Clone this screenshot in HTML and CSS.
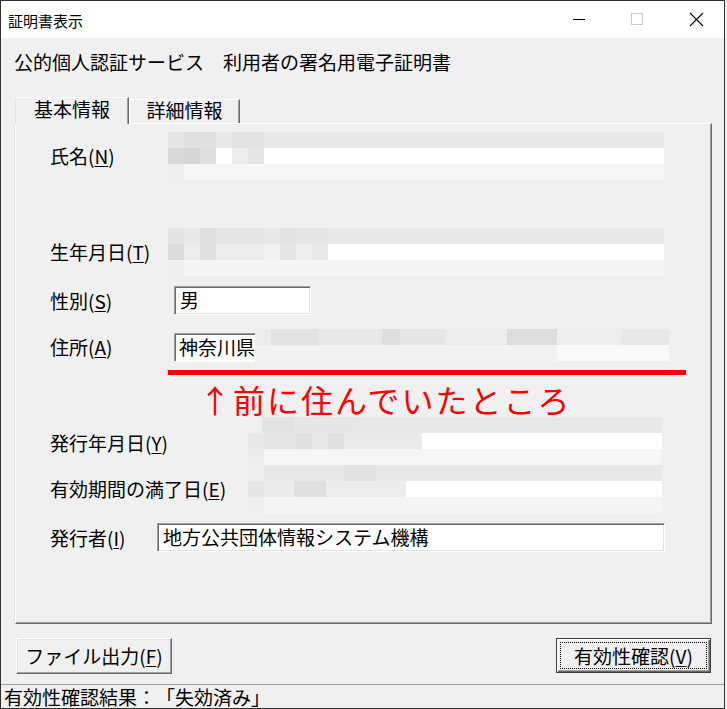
FILE: index.html
```html
<!DOCTYPE html>
<html lang="ja">
<head>
<meta charset="utf-8">
<title>証明書表示</title>
<link rel="stylesheet" href="styles.css">
</head>
<body>
<div class="window">
  <div class="titlebar">
    <span class="title">証明書表示</span>
    <div class="caption">
      <span class="cbtn"><svg width="58" height="37" viewBox="0 0 58 37"><path d="M23 18.5H35" stroke="#000" stroke-width="1"/></svg></span>
      <span class="cbtn"><svg width="58" height="37" viewBox="0 0 58 37"><rect x="23.5" y="12.5" width="11" height="11" fill="none" stroke="#c8c8c8" stroke-width="1"/></svg></span>
      <span class="cbtn"><svg width="58" height="37" viewBox="0 0 58 37"><path d="M24 12L37 25M37 12L24 25" stroke="#000" stroke-width="1.1"/></svg></span>
    </div>
  </div>
  <div class="client">
    <div class="heading">公的個人認証サービス　利用者の署名用電子証明書</div>
    <div class="tabs">
      <div class="tab active">基本情報</div>
      <div class="tab other">詳細情報</div>
    </div>
    <div class="panel">
      <div class="row h48">
        <span class="lbl w118">氏名(<u>N</u>)</span>
        <div class="blur w496"><i class="bn1"></i><i class="bn2"></i><i class="bn3"></i></div>
      </div>
      <div class="row h48 gap48">
        <span class="lbl w118">生年月日(<u>T</u>)</span>
        <div class="blur w496"><i class="bb1"></i><i class="bb2"></i><i class="bb3"></i></div>
      </div>
      <div class="row h29 gap10">
        <span class="lbl w124">性別(<u>S</u>)</span>
        <div class="box sex">男</div>
      </div>
      <div class="row h33 gap14">
        <span class="lbl w124 down5">住所(<u>A</u>)</span>
        <div class="addr">
          <div class="addr-box">神奈川県</div>
          <div class="blur w414"><i class="ba1"></i><i class="ba2"></i></div>
        </div>
      </div>
      <div class="mark"></div>
      <div class="note">↑前に住んでいたところ</div>
      <div class="row h48 gap2">
        <span class="lbl w198 down4">発行年月日(<u>Y</u>)</span>
        <div class="blur w414"><i class="bi1"></i><i class="bi2"></i><i class="bi3"></i></div>
      </div>
      <div class="row h48">
        <span class="lbl w198">有効期間の満了日(<u>E</u>)</span>
        <div class="blur w414"><i class="be1"></i><i class="be2"></i><i class="be3"></i></div>
      </div>
      <div class="row h29 gap10">
        <span class="lbl w107">発行者(<u>I</u>)</span>
        <div class="box issuer">地方公共団体情報システム機構</div>
      </div>
    </div>
    <div class="buttons">
      <div class="btn btn-file">ファイル出力(<u>F</u>)</div>
      <div class="btn btn-check"><span class="focus">有効性確認(<u>V</u>)</span></div>
    </div>
  </div>
  <div class="status">有効性確認結果：「失効済み」</div>
</div>
</body>
</html>
```

FILE: styles.css
```css
* { box-sizing: border-box; }
html, body { margin: 0; padding: 0; }
body {
  width: 727px;
  height: 709px;
  overflow: hidden;
  background: #f0f0f0;
  font-family: "Noto Sans CJK JP", "Noto Sans", sans-serif;
  font-size: 19px;
  color: #000;
  text-spacing-trim: space-all;
  font-feature-settings: "palt" 0;
}
u { text-decoration-thickness: 1px; text-underline-offset: 2px; }

.window {
  width: 725px;
  height: 709px;
  border: 1px solid #2f2f2f;
  display: flex;
  flex-direction: column;
  background: #f0f0f0;
}

.titlebar {
  flex: none;
  height: 37px;
  background: #fff;
  display: flex;
  align-items: center;
  justify-content: space-between;
}
.title { font-size: 15px; line-height: 18px; padding: 2px 0 0 7px; }
.caption { display: flex; align-self: stretch; }
.cbtn { display: block; width: 58px; height: 37px; }
.cbtn svg { display: block; }

.client { flex: 1; display: flex; flex-direction: column; }
.heading { margin: 14px 0 0 13px; line-height: 20px; }

.tabs { display: flex; align-items: flex-end; height: 26px; margin: 25px 0 0 14px; }
.tab {
  line-height: 20px;
  text-align: center;
  background: #f0f0f0;
  border-top: 1px solid #fff;
  border-left: 1px solid #fff;
  border-right: 1px solid #696969;
  box-shadow: inset -1px 0 #a0a0a0;
}
.tab.active {
  width: 114px;
  height: 27px;
  margin-bottom: -1px;
  padding-top: 1px;
  position: relative;
  z-index: 1;
  border-left-color: #e3e3e3;
}
.tab.other { width: 111px; height: 24px; }

.panel {
  width: 697px;
  height: 501px;
  margin-left: 14px;
  padding-top: 8px;
  border-top: 1px solid #fff;
  border-left: 1px solid #fff;
  border-right: 1px solid #696969;
  border-bottom: 1px solid #696969;
  box-shadow: inset -1px -1px #a0a0a0, -1px 0 #e3e3e3;
}

.row { display: flex; align-items: center; padding-left: 34px; }
.row.h48 { height: 48px; }
.row.h29 { height: 29px; }
.row.h33 { height: 33px; align-items: flex-start; }
.gap48 { margin-top: 48px; }
.gap14 { margin-top: 14px; }
.gap10 { margin-top: 10px; }
.gap2 { margin-top: 2px; }

.lbl { flex: none; line-height: 20px; white-space: nowrap; }
.w107 { width: 107px; }
.w118 { width: 118px; }
.w124 { width: 124px; }
.w198 { width: 198px; }
.down4 { padding-top: 4px; }
.down5 { margin-top: 8px; }

.box {
  height: 29px;
  background: #fff;
  border-top: 1px solid #a0a0a0;
  border-left: 1px solid #a0a0a0;
  border-right: 1px solid #fff;
  border-bottom: 1px solid #fff;
  box-shadow: inset 1px 1px #696969, inset -1px -1px #e3e3e3;
  padding-left: 5px;
  line-height: 25px;
  white-space: nowrap;
}
.box.sex { width: 137px; }
.box.issuer { width: 508px; }

.addr { display: flex; align-items: flex-start; }
.addr-box {
  width: 81px;
  height: 29px;
  margin-top: 4px;
  background: #fff;
  border-top: 1px solid #a0a0a0;
  border-left: 1px solid #a0a0a0;
  border-bottom: 1px solid #fff;
  box-shadow: inset 1px 1px #696969;
  padding-left: 4px;
  line-height: 25px;
  white-space: nowrap;
}

.blur { display: flex; flex-direction: column; }
.blur i { display: block; height: 16px; }
.w496 { width: 496px; }
.w414 { width: 414px; }

.bn1 { background: linear-gradient(to right, #e6e6e6 0 16px, #e0e0e0 16px 48px, #e8e8e8 48px 64px, #e3e3e3 64px 96px, #e8e8e8 96px); }
.bn2 { background: linear-gradient(to right, #d9d9d9 0 16px, #d6d6d6 16px 32px, #dedede 32px 48px, #fff 48px 64px, #ececec 64px 80px, #e6e6e6 80px 96px, #fff 96px); }
.bn3 { background: linear-gradient(to right, #efefef 0 16px, #f6f6f6 16px); }

.bb1 { background: linear-gradient(to right, #e4e4e4 0 16px, #e8e8e8 16px 32px, #e0e0e0 32px 48px, #e6e6e6 48px 96px, #e8e8e8 96px 112px, #e3e3e3 112px 128px, #e6e6e6 128px 160px, #e8e8e8 160px); }
.bb2 { background: linear-gradient(to right, #dcdcdc 0 16px, #ececec 16px 32px, #e0e0e0 32px 48px, #ececec 48px 96px, #f2f2f2 96px 112px, #e6e6e6 112px 128px, #eeeeee 128px 144px, #e9e9e9 144px 160px, #fff 160px); }
.bb3 { background: linear-gradient(to right, #efefef 0 16px, #f5f5f5 16px); }

.ba1 { background: linear-gradient(to right, #ececec 0 16px, #e3e3e3 16px 63px, #e8e8e8 63px 127px, #dedede 127px 145px, #e6e6e6 145px 191px, #ececec 191px 252px, #dddddd 252px 302px, #eeeeee 302px 366px, #e8e8e8 366px); }
.ba2 { background: linear-gradient(to right, #f2f2f2 0 302px, #f9f9f9 302px); }

.bi1 { background: linear-gradient(to right, #f0f0f0 0 14px, #e3e3e3 14px 46px, #e6e6e6 46px 110px, #e8e8e8 110px); }
.bi2 { background: linear-gradient(to right, #e8e8e8 0 16px, #e6e6e6 16px 48px, #e0e0e0 48px 64px, #e8e8e8 64px 80px, #e0e0e0 80px 96px, #eaeaea 96px 174px, #fff 174px); }
.bi3 { background: linear-gradient(to right, #ececec 0 16px, #f6f6f6 16px); }

.be1 { background: linear-gradient(to right, #eeeeee 0 16px, #e8e8e8 16px 96px, #e2e2e2 96px 128px, #e8e8e8 128px); }
.be2 { background: linear-gradient(to right, #e6e6e6 0 16px, #ebebeb 16px 46px, #e0e0e0 46px 78px, #ececec 78px 158px, #fff 158px); }
.be3 { background: linear-gradient(to right, #eeeeee 0 16px, #f5f5f5 16px); }

.mark { margin: 8px 0 0 152px; width: 518px; height: 5px; background: #ff0000; }
.note {
  margin: 8px 0 0 183px;
  font-size: 32px;
  line-height: 32px;
  letter-spacing: 2px;
  color: #ff0000;
  white-space: nowrap;
}

.buttons {
  display: flex;
  justify-content: space-between;
  align-items: flex-start;
  margin: 14px 13px 0 15px;
}
.btn {
  display: flex;
  align-items: center;
  justify-content: center;
  background: #f0f0f0;
  line-height: 20px;
  white-space: nowrap;
}
.btn-file {
  width: 156px;
  height: 36px;
  border-top: 1px solid #fff;
  border-left: 1px solid #fff;
  border-right: 1px solid #696969;
  border-bottom: 1px solid #696969;
  box-shadow: inset -1px -1px #a0a0a0, inset 1px 1px #e3e3e3;
}
.btn-check {
  width: 155px;
  height: 35px;
  border: 1px solid #3c3c3c;
  box-shadow: inset 1px 1px #fff, inset -1px -1px #696969, inset -2px -2px #a0a0a0;
  padding: 3px;
}
.focus {
  flex: 1;
  align-self: stretch;
  display: flex;
  align-items: center;
  justify-content: center;
  border: 1px dotted #000;
}

.status {
  flex: none;
  height: 24px;
  border-top: 1px solid #a0a0a0;
  padding-left: 3px;
  line-height: 23px;
  white-space: nowrap;
}
```
